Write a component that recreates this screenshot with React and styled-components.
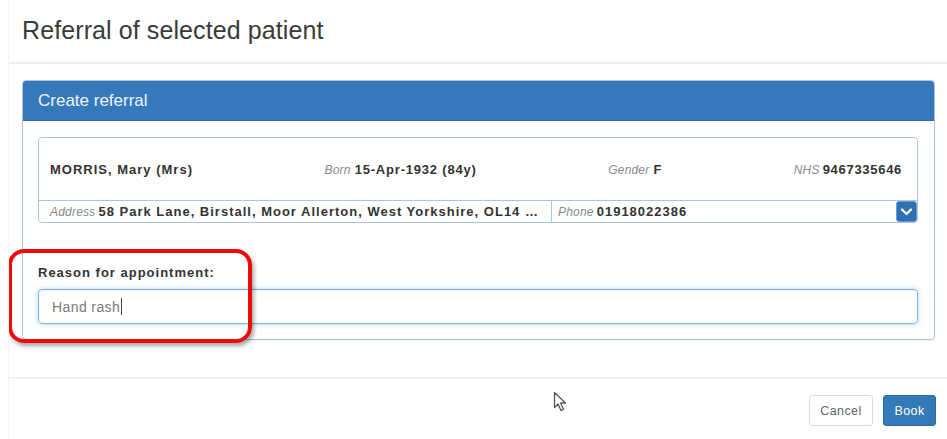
import React from 'react'
import styled, { createGlobalStyle } from 'styled-components'

const GlobalStyle = createGlobalStyle`
  body {
    margin: 0;
    background: #fff;
    font-family: 'Liberation Sans', Arial, sans-serif;
    color: #333;
  }
`

const Modal = styled.div`
  position: relative;
  margin-left: 8px;
  height: 439px;
  border-left: 1px solid #f4f4f4;
  overflow: hidden;
`

const Header = styled.div`
  height: 64px;
  padding: 16px 0 0 13px;
  box-sizing: border-box;
  border-bottom: 2px solid #eeeeee;
`

const Title = styled.h4`
  margin: 0;
  font-size: 25px;
  line-height: 28px;
  font-weight: normal;
  letter-spacing: 0.1px;
  color: #3a3a3a;
`

const Body = styled.div`
  padding: 16px 12px 0 13px;
`

const Panel = styled.div`
  border: 1px solid #a9c4e4;
  border-radius: 4px;
  overflow: hidden;
  box-shadow: 0 1px 1px rgba(0, 0, 0, 0.05);
`

const PanelHeading = styled.div`
  height: 40px;
  box-sizing: border-box;
  padding: 0 15px;
  display: flex;
  align-items: center;
  background: #3679bb;
  border-bottom: 1px solid #2e6ba8;
  color: #eef4fb;
  font-size: 17px;
`

const PanelBody = styled.div`
  padding: 16px 16px 15px 15px;
`

const Banner = styled.div`
  border: 1px solid #a9c4e4;
  border-radius: 4px;
  font-size: 13px;
  color: #333;
`

const BannerTop = styled.div`
  height: 62px;
  display: flex;
  align-items: center;
  justify-content: space-between;
  padding: 0 15px 0 11px;
  border-bottom: 1px solid #a9c4e4;
`

const Field = styled.span`
  white-space: nowrap;
`

const Key = styled.span`
  font-style: italic;
  color: #8a8a8a;
  font-size: 12px;
  letter-spacing: 0.2px;
  margin-right: ${(p) => p.gap || 4}px;
`

const Val = styled.span`
  font-weight: bold;
  letter-spacing: ${(p) => p.spacing || 0.8}px;
  color: #333;
`

const BannerBottom = styled.div`
  height: 21px;
  display: flex;
  align-items: center;
  font-size: 13px;
`

const Cell = styled.div`
  box-sizing: border-box;
  height: 100%;
  display: flex;
  align-items: center;
  padding: 0 ${(p) => p.padRight || 6}px 0 ${(p) => p.padLeft || 11}px;
  white-space: nowrap;
  overflow: hidden;
  ${(p) => (p.fixed ? `width: ${p.fixed}px; flex: none; border-right: 1px solid #a9c4e4;` : 'flex: 1;')}
`

const Ellipsis = styled.span`
  overflow: hidden;
  text-overflow: ellipsis;
`

const DropButton = styled.button`
  flex: none;
  width: 21px;
  height: 21px;
  margin: 0 0 0 4px;
  padding: 0;
  border: 1px solid #6d9bd0;
  border-radius: 3px;
  background: #2f6fb6;
  display: flex;
  align-items: center;
  justify-content: center;
`

const Group = styled.div`
  margin-top: 41px;
`

const Label = styled.label`
  display: block;
  font-size: 13px;
  line-height: 18px;
  font-weight: bold;
  letter-spacing: 1px;
  color: #333;
`

const Input = styled.div`
  margin-top: 7px;
  height: 35px;
  box-sizing: border-box;
  border: 1px solid #7fb6ea;
  border-radius: 4px;
  box-shadow: inset 0 1px 1px rgba(0, 0, 0, 0.05), 0 0 5px rgba(102, 175, 233, 0.55);
  padding: 0 13px;
  display: flex;
  align-items: center;
  font-size: 14px;
  letter-spacing: 0.4px;
  color: #7a7a7a;
`

const Caret = styled.span`
  display: inline-block;
  width: 1px;
  height: 17px;
  background: #444;
  margin-left: 1px;
`

const Footer = styled.div`
  margin-top: 37px;
  border-top: 2px solid #f1f1f1;
  padding: 16px 11px 0 0;
  display: flex;
  justify-content: flex-end;
  gap: 10px;
`

const Button = styled.button`
  width: ${(p) => (p.primary ? 53 : 64)}px;
  height: 31px;
  padding: 0;
  border-radius: 3px;
  font-family: 'Liberation Sans', Arial, sans-serif;
  font-size: 12.5px;
  letter-spacing: 0.4px;
  border: 1px solid ${(p) => (p.primary ? '#2e6da4' : '#dcdcdc')};
  background: ${(p) => (p.primary ? '#337ab7' : '#fff')};
  color: ${(p) => (p.primary ? '#fff' : '#666')};
`

const Highlight = styled.div`
  position: absolute;
  left: -1px;
  top: 249px;
  width: 244px;
  height: 94px;
  box-sizing: border-box;
  border: 4px solid #ee0a0a;
  border-radius: 16px;
  box-shadow: 2px 3px 4px rgba(0, 0, 0, 0.35);
  pointer-events: none;
`

const Pointer = styled.svg`
  position: absolute;
  left: 544px;
  top: 391px;
`

const App = () => {
  return (
    <>
      <GlobalStyle />
      <Modal>
        <Header>
          <Title>Referral of selected patient</Title>
        </Header>
        <Body>
          <Panel>
            <PanelHeading>Create referral</PanelHeading>
            <PanelBody>
              <Banner>
                <BannerTop>
                  <Field>
                    <Val spacing={1}>MORRIS, Mary (Mrs)</Val>
                  </Field>
                  <Field>
                    <Key>Born</Key>
                    <Val>15-Apr-1932 (84y)</Val>
                  </Field>
                  <Field>
                    <Key>Gender</Key>
                    <Val>F</Val>
                  </Field>
                  <Field>
                    <Key gap={3}>NHS</Key>
                    <Val spacing={0.7}>9467335646</Val>
                  </Field>
                </BannerTop>
                <BannerBottom>
                  <Cell fixed={513}>
                    <Key gap={3}>Address</Key>
                    <Ellipsis>
                      <Val spacing={1}>58 Park Lane, Birstall, Moor Allerton, West Yorkshire, OL14 …</Val>
                    </Ellipsis>
                  </Cell>
                  <Cell padLeft={6}>
                    <Key gap={3}>Phone</Key>
                    <Val spacing={1}>01918022386</Val>
                  </Cell>
                  <DropButton type='button'>
                    <svg width='13' height='13' viewBox='0 0 13 13'>
                      <path d='M2 4.5 L6.5 9 L11 4.5' fill='none' stroke='#fff' strokeWidth='2.2' strokeLinecap='round' strokeLinejoin='round' />
                    </svg>
                  </DropButton>
                </BannerBottom>
              </Banner>
              <Group>
                <Label>Reason for appointment:</Label>
                <Input>
                  Hand rash
                  <Caret />
                </Input>
              </Group>
            </PanelBody>
          </Panel>
        </Body>
        <Footer>
          <Button type='button'>Cancel</Button>
          <Button type='button' primary>
            Book
          </Button>
        </Footer>
        <Highlight />
        <Pointer width='18' height='22' viewBox='0 0 18 22'>
          <path d='M1.5 1.5 L1.5 16.5 L5 13 L8 19.5 L10.5 18.3 L7.6 12 L12.5 12 Z' fill='#fff' stroke='#555' strokeWidth='1.3' strokeLinejoin='round' />
        </Pointer>
      </Modal>
    </>
  )
}

export default App
